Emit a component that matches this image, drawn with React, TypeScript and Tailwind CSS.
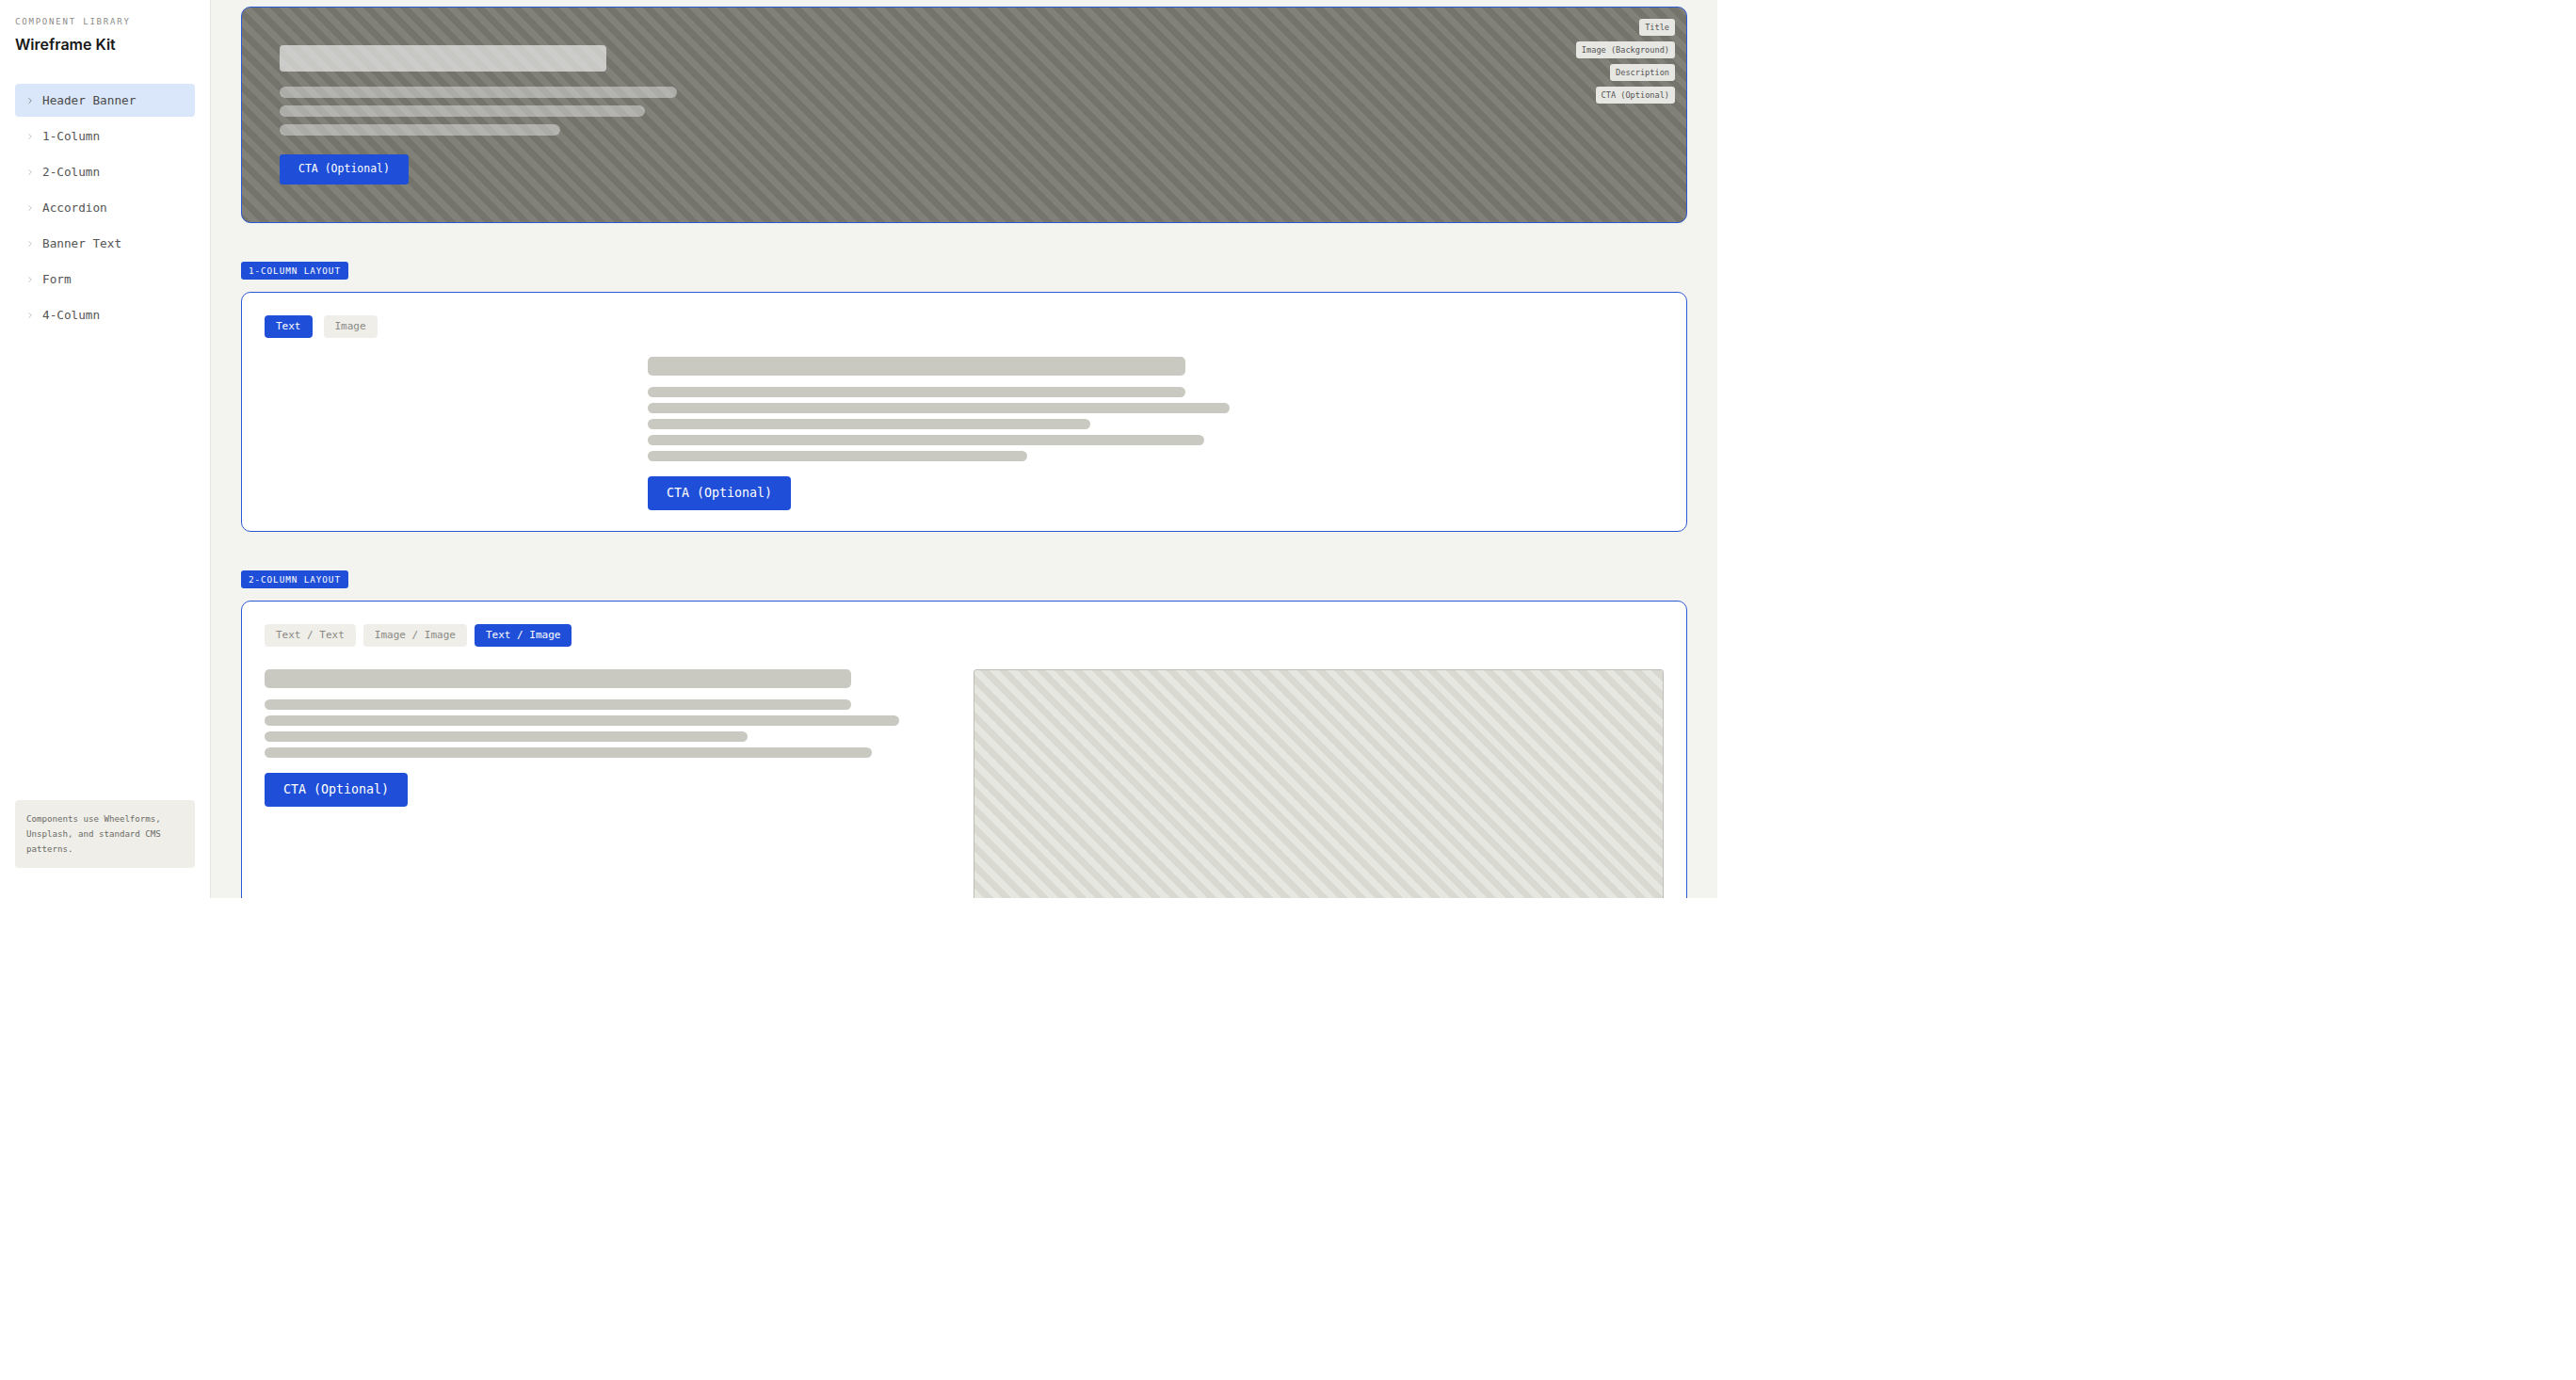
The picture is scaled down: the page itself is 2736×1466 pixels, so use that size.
import { ChevronRight } from "lucide-react";

const navItems = [
  "Header Banner",
  "1-Column",
  "2-Column",
  "Accordion",
  "Banner Text",
  "Form",
  "4-Column",
];

const bannerTags = ["Title", "Image (Background)", "Description", "CTA (Optional)"];

const SectionLabel = ({ text }: { text: string }) => (
  <div className="mb-[13px] block h-[19px] w-fit rounded-[3px] bg-[#1f4fd8] px-2 text-[9.3px] uppercase leading-[19px] tracking-[0.1em] text-white">
    {text}
  </div>
);

const Tab = ({ label, active }: { label: string; active?: boolean }) => (
  <span
    className={
      active
        ? "h-6 rounded-[4px] bg-[#1f4fd8] px-3 text-[11px] leading-6 text-white"
        : "h-6 rounded-[4px] bg-[#efeee9] px-3 text-[11px] leading-6 text-[#8a8a84]"
    }
  >
    {label}
  </span>
);

const CtaButton = () => (
  <button className="mt-4 block h-9 rounded-[4px] bg-[#1f4fd8] px-5 text-[13.3px] text-white">
    CTA (Optional)
  </button>
);

const Sidebar = () => (
  <aside className="flex h-full w-56 shrink-0 flex-col border-r border-[#e6e5df] bg-white px-4 pt-4 pb-8">
    <p className="text-[9px] uppercase leading-[14px] tracking-[0.2em] text-[#8c8c88]">
      Component Library
    </p>
    <h1 className="mt-[7px] font-['Inter',sans-serif] text-[16px] font-semibold leading-5 text-[#161616]">
      Wireframe Kit
    </h1>
    <nav className="mt-8 flex flex-col gap-[3px]">
      {navItems.map((item, i) => (
        <div
          key={item}
          className={
            i === 0
              ? "flex h-[35px] items-center gap-[8px] rounded-[4px] bg-[#dae6f9] pl-[11px] text-[12.7px] text-[#4a4a4a]"
              : "flex h-[35px] items-center gap-[8px] rounded-[4px] pl-[11px] text-[12.7px] text-[#555]"
          }
        >
          <ChevronRight size={10} strokeWidth={2} className={i === 0 ? "text-[#777]" : "text-[#b5b5b0]"} />
          {item}
        </div>
      ))}
    </nav>
    <div className="mt-auto rounded-[4px] bg-[#efeee9] p-3 text-[9.15px] leading-4 text-[#6b6b66]">
      Components use Wheelforms, Unsplash, and standard CMS patterns.
    </div>
  </aside>
);

export default function App() {
  return (
    <div className="flex h-[954px] w-[1824px] overflow-hidden font-['DejaVu_Sans_Mono',monospace]">
      <Sidebar />
      <main className="h-full flex-1 overflow-hidden bg-[#f3f3ef] px-8 pt-[7px]">
        {/* header banner */}
        <div className="relative rounded-[10px] border-[1.5px] border-[#2d58d3] bg-[repeating-linear-gradient(45deg,#74746d_0px,#74746d_7px,#81817a_7px,#81817a_14px)] p-10">
          <div className="h-7 w-[347px] rounded-[4px] bg-white/60" />
          <div className="mt-4 flex flex-col gap-2">
            <div className="h-3 w-[422px] rounded-full bg-white/40" />
            <div className="h-3 w-[388px] rounded-full bg-white/40" />
            <div className="h-3 w-[298px] rounded-full bg-white/40" />
          </div>
          <button className="mt-5 block h-8 rounded-[3px] bg-[#1f4fd8] px-5 text-[11.5px] text-white">
            CTA (Optional)
          </button>
          <div className="absolute right-3 top-3 flex flex-col items-end gap-[6px]">
            {bannerTags.map((tag) => (
              <span
                key={tag}
                className="h-[18px] rounded-[3px] bg-[#e6e6e2] px-1.5 text-[8.6px] leading-[18px] text-[#555]"
              >
                {tag}
              </span>
            ))}
          </div>
        </div>

        {/* 1-column */}
        <div className="mt-[41px]">
          <SectionLabel text="1-Column Layout" />
          <div className="rounded-[10px] border-[1.5px] border-[#2d58d3] bg-white px-6 pt-6 pb-[22px]">
            <div className="flex gap-3">
              <Tab label="Text" active />
              <Tab label="Image" />
            </div>
            <div className="mx-auto mt-5 max-w-[672px]">
              <div className="h-5 w-[85%] rounded-[5px] bg-[#c9c8c1]" />
              <div className="mt-3 flex flex-col gap-[6px]">
                <div className="h-[11px] w-[85%] rounded-full bg-[#c9c8c1]" />
                <div className="h-[11px] w-[92%] rounded-full bg-[#c9c8c1]" />
                <div className="h-[11px] w-[70%] rounded-full bg-[#c9c8c1]" />
                <div className="h-[11px] w-[88%] rounded-full bg-[#c9c8c1]" />
                <div className="h-[11px] w-[60%] rounded-full bg-[#c9c8c1]" />
              </div>
              <CtaButton />
            </div>
          </div>
        </div>

        {/* 2-column */}
        <div className="mt-[41px]">
          <SectionLabel text="2-Column Layout" />
          <div className="rounded-[10px] border-[1.5px] border-[#2d58d3] bg-white px-6 pt-6 pb-6">
            <div className="flex gap-2">
              <Tab label="Text / Text" />
              <Tab label="Image / Image" />
              <Tab label="Text / Image" active />
            </div>
            <div className="mt-6 grid grid-cols-2 gap-5">
              <div>
                <div className="h-5 w-[85%] rounded-[5px] bg-[#c9c8c1]" />
                <div className="mt-3 flex flex-col gap-[6px]">
                  <div className="h-[11px] w-[85%] rounded-full bg-[#c9c8c1]" />
                  <div className="h-[11px] w-[92%] rounded-full bg-[#c9c8c1]" />
                  <div className="h-[11px] w-[70%] rounded-full bg-[#c9c8c1]" />
                  <div className="h-[11px] w-[88%] rounded-full bg-[#c9c8c1]" />
                </div>
                <CtaButton />
              </div>
              <div className="h-[412px] rounded-[3px] border border-[#bdbdb5] bg-[repeating-linear-gradient(45deg,#d9d9d2_0px,#d9d9d2_7px,#e7e7e1_7px,#e7e7e1_14px)]" />
            </div>
          </div>
        </div>
      </main>
    </div>
  );
}
